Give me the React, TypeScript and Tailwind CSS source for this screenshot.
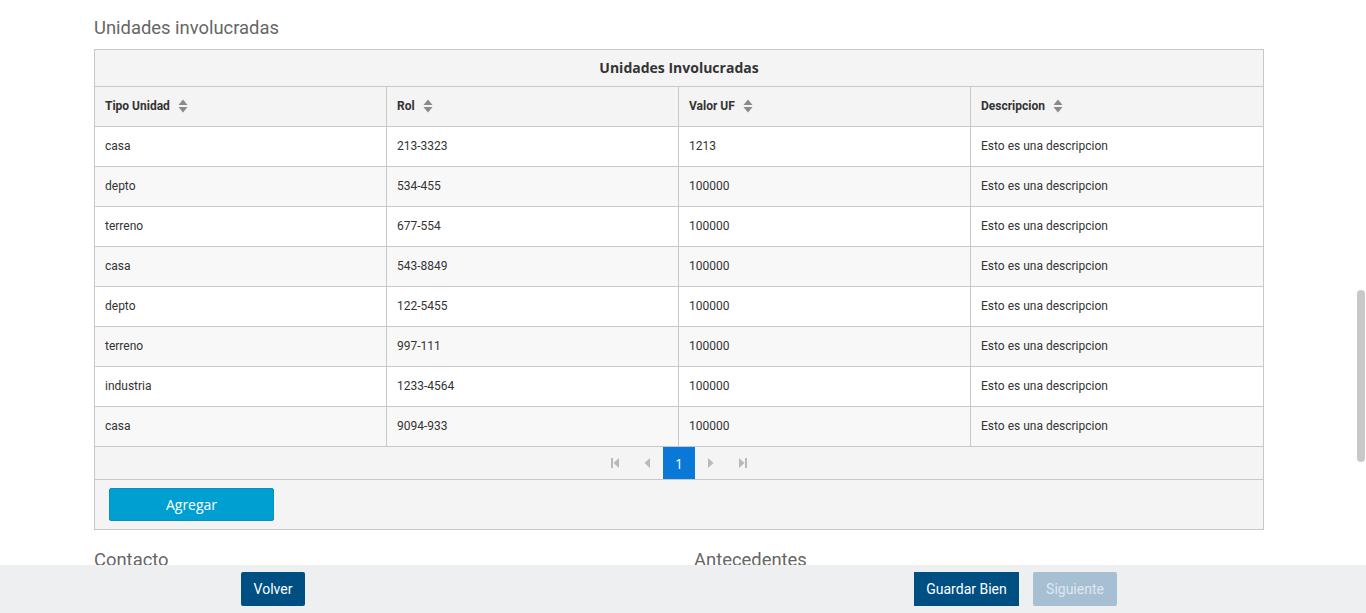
import React from 'react';

const rows = [
  { tipo: 'casa', rol: '213-3323', valor: '1213', desc: 'Esto es una descripcion' },
  { tipo: 'depto', rol: '534-455', valor: '100000', desc: 'Esto es una descripcion' },
  { tipo: 'terreno', rol: '677-554', valor: '100000', desc: 'Esto es una descripcion' },
  { tipo: 'casa', rol: '543-8849', valor: '100000', desc: 'Esto es una descripcion' },
  { tipo: 'depto', rol: '122-5455', valor: '100000', desc: 'Esto es una descripcion' },
  { tipo: 'terreno', rol: '997-111', valor: '100000', desc: 'Esto es una descripcion' },
  { tipo: 'industria', rol: '1233-4564', valor: '100000', desc: 'Esto es una descripcion' },
  { tipo: 'casa', rol: '9094-933', valor: '100000', desc: 'Esto es una descripcion' },
];

const columns = ['Tipo Unidad', 'Rol', 'Valor UF', 'Descripcion'];

const SortIcon = () => (
  <svg width="10" height="14" viewBox="0 0 10 14" className="ml-2 shrink-0">
    <path d="M5 0.5 L9.5 6 L0.5 6 Z" fill="#8a8a8a" />
    <path d="M5 13.5 L9.5 8 L0.5 8 Z" fill="#8a8a8a" />
  </svg>
);

const PagerIcon = ({ kind }: { kind: 'first' | 'prev' | 'next' | 'last' }) => (
  <svg width="10" height="12" viewBox="0 0 10 12">
    {kind === 'first' && (
      <>
        <rect x="1" y="1" width="2" height="10" fill="#b9b9b9" />
        <path d="M9 1 L9 11 L3.5 6 Z" fill="#b9b9b9" />
      </>
    )}
    {kind === 'prev' && <path d="M8 1 L8 11 L2.5 6 Z" fill="#b9b9b9" />}
    {kind === 'next' && <path d="M2 1 L2 11 L7.5 6 Z" fill="#b9b9b9" />}
    {kind === 'last' && (
      <>
        <path d="M1 1 L1 11 L6.5 6 Z" fill="#b9b9b9" />
        <rect x="7" y="1" width="2" height="10" fill="#b9b9b9" />
      </>
    )}
  </svg>
);

export default function App() {
  return (
    <div className="min-h-screen bg-white font-['Roboto',sans-serif] text-[#333]">
      <div className="pl-[94px] pt-[16px] w-[1264px]">
        <h2 className="text-[18.4px] leading-[24px] text-[#666] mb-[9px]">Unidades involucradas</h2>

        <div className="border border-[#c8c8c8] bg-[#f4f4f4]">
          <div className="h-[37px] pb-[2px] flex items-center justify-center border-b border-[#c8c8c8] font-['Open_Sans',sans-serif] font-bold text-[14px] text-[#333]">
            Unidades Involucradas
          </div>

          <div className="grid grid-cols-4">
            {columns.map((c, i) => (
              <div
                key={c}
                className={`h-[40px] pb-[2px] flex items-center px-[10px] text-[12px] font-bold border-b border-[#c8c8c8] ${i < 3 ? 'border-r' : ''}`}
              >
                {c}
                <SortIcon />
              </div>
            ))}
            {rows.map((r, ri) =>
              [r.tipo, r.rol, r.valor, r.desc].map((v, i) => (
                <div
                  key={`${ri}-${i}`}
                  className={`h-[40px] pb-[2px] flex items-center px-[10px] text-[12px] border-b border-[#c8c8c8] ${i < 3 ? 'border-r' : ''} ${ri % 2 === 0 ? 'bg-white' : 'bg-[#f8f8f8]'}`}
                >
                  {v}
                </div>
              ))
            )}
          </div>

          <div className="h-[33px] flex items-center justify-center border-b border-[#c8c8c8]">
            <div className="w-[32px] h-[32px] flex items-center justify-center"><PagerIcon kind="first" /></div>
            <div className="w-[32px] h-[32px] flex items-center justify-center"><PagerIcon kind="prev" /></div>
            <div className="w-[32px] h-[32px] flex items-center justify-center bg-[#0a78d6] text-white font-['Open_Sans',sans-serif] text-[14px]">1</div>
            <div className="w-[32px] h-[32px] flex items-center justify-center"><PagerIcon kind="next" /></div>
            <div className="w-[32px] h-[32px] flex items-center justify-center"><PagerIcon kind="last" /></div>
          </div>

          <div className="h-[49px] flex items-center px-[14px]">
            <button className="w-[165px] h-[33px] rounded-[2px] bg-[#009fd1] border border-[#0a8fc2] text-white font-['Open_Sans',sans-serif] text-[14px]">
              Agregar
            </button>
          </div>
        </div>

        <div className="grid grid-cols-2 mt-[18px]">
          <h3 className="text-[18.4px] leading-[24px] text-[#666]">Contacto</h3>
          <h3 className="text-[18.4px] leading-[24px] text-[#666] pl-[15px]">Antecedentes</h3>
        </div>
        <div className="h-[200px]" />
      </div>

      <div className="fixed left-0 right-0 bottom-0 h-[48px] bg-[#eeeff1] flex items-center">
        <div className="pl-[241px]">
          <button className="h-[34px] w-[64px] rounded-[2px] bg-[#004f82] text-white text-[14px]">Volver</button>
        </div>
        <div className="ml-[609px] flex gap-[14px]">
          <button className="h-[34px] w-[105px] bg-[#004f82] text-white text-[14px]">Guardar Bien</button>
          <button className="h-[34px] w-[84px] rounded-[2px] bg-[#a7bfd3] text-[#dfe8f0] text-[14px]">Siguiente</button>
        </div>
      </div>

      <div className="fixed right-[1px] top-[290px] w-[8px] h-[172px] rounded-full bg-[#c8c8c8]" />
    </div>
  );
}
